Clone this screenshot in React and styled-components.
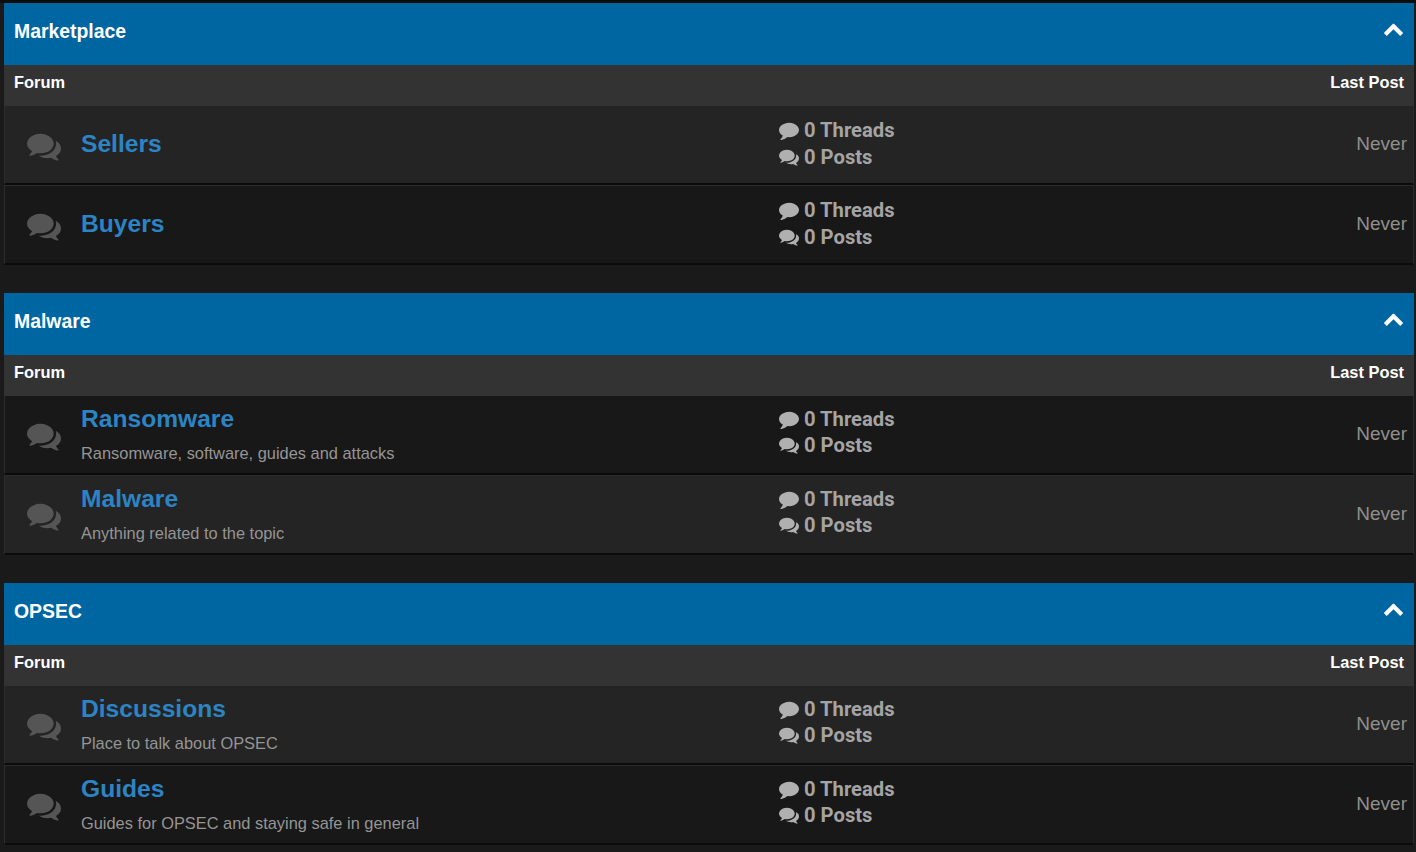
import styled, { createGlobalStyle } from 'styled-components';

const Global = createGlobalStyle`
  html, body {
    margin: 0;
    background: #1a1a1a;
    font-family: "Liberation Sans", Arial, sans-serif;
  }
`;

const TopLine = styled.div`
  height: 3px;
  background: #0d0d0d;
`;

const Page = styled.div`
  padding: 0 2px 0 4px;
  height: 849px;
  overflow: hidden;
`;

const Category = styled.section`
  margin-bottom: 28px;
`;

const CategoryHead = styled.div`
  display: flex;
  justify-content: space-between;
  align-items: center;
  height: 56px;
  padding: 0 10px 6px 10px;
  background: #0066a2;
  color: #fff;
  font-size: 19.4px;
  font-weight: 700;
`;

const Glyph = styled.svg`
  display: block;
  width: ${(p) => p.$size}px;
  height: ${(p) => p.$size}px;
  fill: currentColor;
`;

const Chevron = styled.span`
  display: block;
  margin-bottom: 6px;
`;

const Columns = styled.div`
  display: flex;
  justify-content: space-between;
  align-items: center;
  height: 35px;
  padding: 0 10px 6px 10px;
  background: #333;
  color: #fff;
  font-size: 16.4px;
  font-weight: 700;
`;

const Row = styled.div`
  display: grid;
  grid-template-columns: 76px 698px 1fr auto;
  align-items: center;
  height: 77px;
  padding-right: 6px;
  background: ${(p) => (p.$alt ? '#181818' : '#242424')};
  border-left: 1px solid #2c2c2c;
  border-right: 1px solid #2c2c2c;
  border-bottom: 2px solid #0b0b0b;
  & + & {
    border-top: 1px solid #2c2c2c;
  }
`;

const IconCell = styled.div`
  display: flex;
  justify-content: center;
  padding: 2px 0 0 2px;
  color: #555;
`;

const Info = styled.div`
  display: flex;
  flex-direction: column;
  gap: 12px;
  margin-top: -2px;
`;

const Title = styled.a`
  color: #2c84c4;
  font-size: 24.6px;
  font-weight: 700;
  line-height: 26px;
`;

const Desc = styled.div`
  color: #959595;
  font-size: 16.4px;
  line-height: 18px;
`;

const Stats = styled.div`
  display: flex;
  flex-direction: column;
  gap: ${(p) => (p.$desc ? '7px' : '8px')};
  margin-top: ${(p) => (p.$desc ? '-5px' : '-3px')};
  color: #a4a4a4;
  font-family: Roboto, sans-serif;
  font-size: 20.2px;
  font-weight: 700;
`;

const Stat = styled.div`
  display: flex;
  align-items: center;
  gap: 5px;
  height: 19px;
  svg {
    color: #b0b0b0;
  }
`;

const Never = styled.div`
  margin-top: -1px;
  color: #8f8f8f;
  font-size: 19px;
`;

const CHEVRON =
  'M1683 1331l-166 165q-19 19-45 19t-45-19l-531-531-531 531q-19 19-45 19t-45-19l-166-165q-19-19-19-45.5t19-45.5l742-741q19-19 45-19t45 19l742 741q19 19 19 45.5t-19 45.5z';
const COMMENT =
  'M1792 896q0 174-120 321.5t-326 233-450 85.5q-70 0-145-8-198 175-460 242-49 14-114 22-17 2-30.5-9t-17.5-29v-1q-3-4-.5-12t2-10 4.5-9.5l6-9 7-8.5 8-9q7-8 31-34.5t34.5-38 31-39.5 32.5-51 27-59 26-76q-157-89-247.5-220t-90.5-281q0-130 71-248.5t191-204.5 286-136.5 348-50.5q244 0 450 85.5t326 233 120 321.5z';
const COMMENTS =
  'M1408 768q0 139-94 257t-256.5 186.5-353.5 68.5q-86 0-176-16-124 88-278 128-36 9-86 16h-3q-11 0-20.5-8t-11.5-21q-1-3-1-6.5t.5-6.5 2-6l2.5-5 3.5-5.5 4-5 4.5-5 4-4.5q5-6 23-25t26-29.5 22.5-29 25-38.5 20.5-44q-124-72-195-177t-71-224q0-139 94-257t256.5-186.5 353.5-68.5 353.5 68.5 256.5 186.5 94 257zm384 256q0 120-71 224.5t-195 176.5q10 24 20.5 44t25 38.5 22.5 29 26 29.5 23 25q1 1 4 4.5t4.5 5 4 5 3.5 5.5l2.5 5 2 6 .5 6.5-1 6.5q-3 14-13 22t-22 7q-50-7-86-16-154-40-278-128-90 16-176 16-271 0-472-132 58 4 88 4 161 0 309-45t264-129q125-92 192-212t67-254q0-77-23-152 129 71 204 178t75 230z';

const Icon = ({ d, size }) => (
  <Glyph $size={size} viewBox="0 0 1792 1792">
    <path d={d} />
  </Glyph>
);

const data = [
  {
    name: 'Marketplace',
    forums: [
      { title: 'Sellers' },
      { title: 'Buyers', alt: true },
    ],
  },
  {
    name: 'Malware',
    forums: [
      { title: 'Ransomware', desc: 'Ransomware, software, guides and attacks', alt: true },
      { title: 'Malware', desc: 'Anything related to the topic' },
    ],
  },
  {
    name: 'OPSEC',
    forums: [
      { title: 'Discussions', desc: 'Place to talk about OPSEC' },
      { title: 'Guides', desc: 'Guides for OPSEC and staying safe in general', alt: true },
    ],
  },
];

export default function App() {
  return (
    <>
      <Global />
      <TopLine />
      <Page>
        {data.map((cat) => (
          <Category key={cat.name}>
            <CategoryHead>
              {cat.name}
              <Chevron>
                <Icon d={CHEVRON} size={21} />
              </Chevron>
            </CategoryHead>
            <Columns>
              <span>Forum</span>
              <span>Last Post</span>
            </Columns>
            {cat.forums.map((f) => (
              <Row key={f.title} $alt={f.alt}>
                <IconCell>
                  <Icon d={COMMENTS} size={34} />
                </IconCell>
                <Info>
                  <Title>{f.title}</Title>
                  {f.desc && <Desc>{f.desc}</Desc>}
                </Info>
                <Stats $desc={!!f.desc}>
                  <Stat>
                    <Icon d={COMMENT} size={20} />0 Threads
                  </Stat>
                  <Stat>
                    <Icon d={COMMENTS} size={20} />0 Posts
                  </Stat>
                </Stats>
                <Never>Never</Never>
              </Row>
            ))}
          </Category>
        ))}
      </Page>
    </>
  );
}
